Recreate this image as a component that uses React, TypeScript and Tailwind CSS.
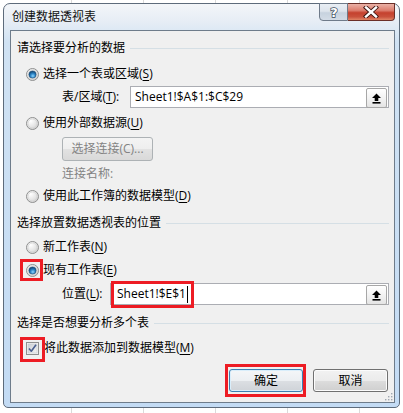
import React from "react";

function Radio({ checked }: { checked?: boolean }) {
  return (
    <svg width="13" height="13" viewBox="0 0 13 13" className="shrink-0 block">
      <defs>
        <linearGradient id="rOuter" x1="0" y1="0" x2="1" y2="1">
          <stop offset="0%" stopColor="#9a9a9a" />
          <stop offset="100%" stopColor="#c8c8c8" />
        </linearGradient>
        <radialGradient id="rFill" cx="35%" cy="30%" r="75%">
          <stop offset="0%" stopColor="#ffffff" />
          <stop offset="60%" stopColor="#e6e6e6" />
          <stop offset="100%" stopColor="#cfcfcf" />
        </radialGradient>
        <radialGradient id="rDot" cx="55%" cy="70%" r="70%">
          <stop offset="0%" stopColor="#8ed6ff" />
          <stop offset="45%" stopColor="#2d86c8" />
          <stop offset="100%" stopColor="#0c3a66" />
        </radialGradient>
      </defs>
      <circle cx="6.5" cy="6.5" r="6" fill="url(#rFill)" stroke="#8e8f8f" strokeWidth="1" />
      <circle cx="6.5" cy="6.5" r="4.6" fill="none" stroke="#d2d2d2" strokeWidth="0.8" />
      {checked && <circle cx="6.5" cy="6.5" r="3.6" fill="url(#rDot)" stroke="#1b4d79" strokeWidth="0.6" />}
    </svg>
  );
}

function CheckBox() {
  return (
    <svg width="13" height="13" viewBox="0 0 13 13" className="shrink-0 block">
      <defs>
        <linearGradient id="cbFill" x1="0" y1="0" x2="1" y2="1">
          <stop offset="0%" stopColor="#cbcfd5" />
          <stop offset="100%" stopColor="#f4f4f4" />
        </linearGradient>
      </defs>
      <rect x="0.5" y="0.5" width="12" height="12" fill="#f4f4f4" stroke="#8e8f8f" />
      <rect x="2" y="2" width="9" height="9" fill="url(#cbFill)" stroke="#c4c8cd" strokeWidth="0.6" />
      <path d="M3 6.5 L5.3 9.2 L10 2.8" fill="none" stroke="#4a5f8f" strokeWidth="1.6" strokeLinejoin="round" />
    </svg>
  );
}

function RangeButton() {
  return (
    <div className="absolute right-[1px] top-[1px] w-[21px] h-[20px] rounded-[2px] border border-[#a7a7a7] bg-[linear-gradient(180deg,#ffffff_0%,#f3f3f3_50%,#e4e4e4_100%)] flex items-center justify-center">
      <svg width="11" height="11" viewBox="0 0 11 11">
        <path d="M5.5 0.5 L10 5 H7.3 V8 H3.7 V5 H1 Z" fill="#000" />
        <rect x="1.5" y="9" width="8" height="1.6" fill="#000" />
      </svg>
    </div>
  );
}

function Heading({ children }: { children: React.ReactNode }) {
  return (
    <div className="h-[16px] flex items-center">
      <span className="leading-[16px] whitespace-nowrap">{children}</span>
      <div className="flex-1 h-px bg-[#d5dfe5] ml-[5px]" />
    </div>
  );
}

function RedBox({ cls }: { cls: string }) {
  return <div className={`absolute border-[3px] border-[#ed1c24] pointer-events-none ${cls}`} />;
}

export default function App() {
  return (
    <div className="w-[403px] h-[413px] overflow-hidden bg-white bg-[repeating-linear-gradient(90deg,transparent_0px,transparent_71px,#dadada_71px,#dadada_72px)] pt-[3px] pl-[3px] font-['Open_Sans','Noto_Sans_CJK_SC',sans-serif] text-[12px] text-black">
      <div className="w-[397px] h-[405px] rounded-t-[7px] rounded-b-[5px] border border-[#5d6b7b] bg-[linear-gradient(180deg,#f3f6f9_0px,#e6edf5_18px,#d0e2f3_38px,#c3dbf4_100%)] px-[6px] pr-[4px] flex flex-col">
        {/* title bar */}
        <div className="h-[26px] flex items-center">
          <span className="pl-[2px] leading-[16px] text-[#111]">创建数据透视表</span>
          <div className="ml-auto self-start mt-[-1px] flex">
            <div className="w-[29px] h-[18px] rounded-bl-[4px] border border-[#6f7b8a] bg-[linear-gradient(180deg,#e9eef4_0%,#dde4ec_45%,#c7d2de_55%,#d3dce6_100%)] flex items-center justify-center">
              <svg width="14" height="14" viewBox="0 0 14 14">
                <text x="7" y="12" textAnchor="middle" fontSize="13" fontWeight="bold" fontFamily="DejaVu Sans, sans-serif" fill="#ffffff" stroke="#3d4a5a" strokeWidth="1.4" paintOrder="stroke">?</text>
              </svg>
            </div>
            <div className="w-[47px] h-[18px] rounded-br-[4px] border border-l-0 border-[#6b2f28] bg-[linear-gradient(180deg,#eab1a6_0%,#dc7e6e_40%,#c5412e_55%,#c9513c_80%,#e08566_100%)] flex items-center justify-center">
              <svg width="16" height="12" viewBox="0 0 16 12">
                <path d="M3 1.5 L13 10.5 M13 1.5 L3 10.5" stroke="#3b1410" strokeWidth="4.2" strokeLinecap="square" />
                <path d="M3 1.5 L13 10.5 M13 1.5 L3 10.5" stroke="#ffffff" strokeWidth="2.4" strokeLinecap="square" />
              </svg>
            </div>
          </div>
        </div>

        {/* content */}
        <div className="relative w-[385px] h-[373px] border border-[#6e7c8b] bg-[#f0f0f0] pl-[6px] pr-[5px] flex flex-col">
          <div className="mt-[9px]">
            <Heading>请选择要分析的数据</Heading>
          </div>

          <div className="mt-[10px] h-[16px] pl-[9px] flex items-center gap-[4px]">
            <Radio checked />
            <span className="leading-[16px]">选择一个表或区域(<span className="underline underline-offset-2">S</span>)</span>
          </div>

          <div className="mt-[4px] h-[22px] pl-[45px] flex items-center">
            <span className="w-[68px] leading-[16px] whitespace-nowrap">表/区域(<span className="underline underline-offset-2">T</span>):</span>
            <div className="relative flex-1 h-[22px] bg-white border border-[#abadb3] pl-[4px] flex items-center">
              <span className="leading-[16px]">Sheet1!$A$1:$C$29</span>
              <RangeButton />
            </div>
          </div>

          <div className="mt-[7px] h-[16px] pl-[9px] flex items-center gap-[4px]">
            <Radio />
            <span className="leading-[16px]">使用外部数据源(<span className="underline underline-offset-2">U</span>)</span>
          </div>

          <div className="mt-[6px] h-[24px] pl-[45px] flex">
            <div className="w-[91px] h-[24px] rounded-[3px] border border-[#adb2b5] bg-[linear-gradient(180deg,#f4f4f4_0%,#eeeeee_50%,#e2e2e2_51%,#d9d9d9_100%)] flex items-center justify-center text-[#838383]">
              选择连接(C)...
            </div>
          </div>

          <div className="mt-[5px] h-[16px] pl-[45px] flex items-center text-[#838383]">
            <span className="leading-[16px]">连接名称:</span>
          </div>

          <div className="mt-[6px] h-[16px] pl-[9px] flex items-center gap-[4px]">
            <Radio />
            <span className="leading-[16px]">使用此工作簿的数据模型(<span className="underline underline-offset-2">D</span>)</span>
          </div>

          <div className="mt-[11px]">
            <Heading>选择放置数据透视表的位置</Heading>
          </div>

          <div className="mt-[8px] h-[16px] pl-[9px] flex items-center gap-[4px]">
            <Radio />
            <span className="leading-[16px]">新工作表(<span className="underline underline-offset-2">N</span>)</span>
          </div>

          <div className="mt-[7px] h-[16px] pl-[9px] flex items-center gap-[4px]">
            <div className="relative">
              <Radio checked />
              <RedBox cls="left-[-6px] top-[-5px] w-[23px] h-[22px]" />
            </div>
            <span className="leading-[16px]">现有工作表(<span className="underline underline-offset-2">E</span>)</span>
          </div>

          <div className="mt-[5px] h-[22px] pl-[45px] flex items-center">
            <span className="w-[48px] leading-[16px] whitespace-nowrap">位置(<span className="underline underline-offset-2">L</span>):</span>
            <div className="relative flex-1 h-[22px] bg-white border border-[#abadb3] pl-[6px] flex items-center">
              <span className="leading-[16px]">Sheet1!$E$1</span>
              <span className="ml-[1px] w-px h-[17px] bg-black" />
              <RangeButton />
              <RedBox cls="left-[0px] top-[-3px] w-[83px] h-[27px]" />
            </div>
          </div>

          <div className="mt-[10px]">
            <Heading>选择是否想要分析多个表</Heading>
          </div>

          <div className="mt-[9px] h-[16px] pl-[9px] flex items-center gap-[5px]">
            <div className="relative">
              <CheckBox />
              <RedBox cls="left-[-6px] top-[-5px] w-[25px] h-[25px]" />
            </div>
            <span className="leading-[16px]">将此数据添加到数据模型(<span className="underline underline-offset-2">M</span>)</span>
          </div>

          <div className="mt-[13px] h-[23px] pr-[1px] flex justify-end gap-[10px]">
            <div className="relative w-[74px] h-[23px]">
              <div className="w-full h-full rounded-[3px] border border-[#3c7fb1] bg-[linear-gradient(180deg,#f4f6f8_0%,#eceff2_50%,#dcdfe3_51%,#cfd3d8_100%)] shadow-[inset_0_0_0_1px_#d9eefb] flex items-center justify-center">
                确定
              </div>
              <RedBox cls="left-[-4px] top-[-5px] w-[81px] h-[33px]" />
            </div>
            <div className="w-[75px] h-[23px] rounded-[3px] border border-[#707070] bg-[linear-gradient(180deg,#f2f2f2_0%,#ebebeb_50%,#dddddd_51%,#cfcfcf_100%)] shadow-[inset_0_0_0_1px_#fcfcfc] flex items-center justify-center">
              取消
            </div>
          </div>

          <svg width="10" height="10" viewBox="0 0 10 10" className="absolute right-[1px] bottom-[1px]">
            <g fill="#a0a8b2">
              <rect x="8" y="2" width="1.4" height="1.4" />
              <rect x="5" y="5" width="1.4" height="1.4" />
              <rect x="8" y="5" width="1.4" height="1.4" />
              <rect x="2" y="8" width="1.4" height="1.4" />
              <rect x="5" y="8" width="1.4" height="1.4" />
              <rect x="8" y="8" width="1.4" height="1.4" />
            </g>
          </svg>
        </div>
      </div>
    </div>
  );
}
